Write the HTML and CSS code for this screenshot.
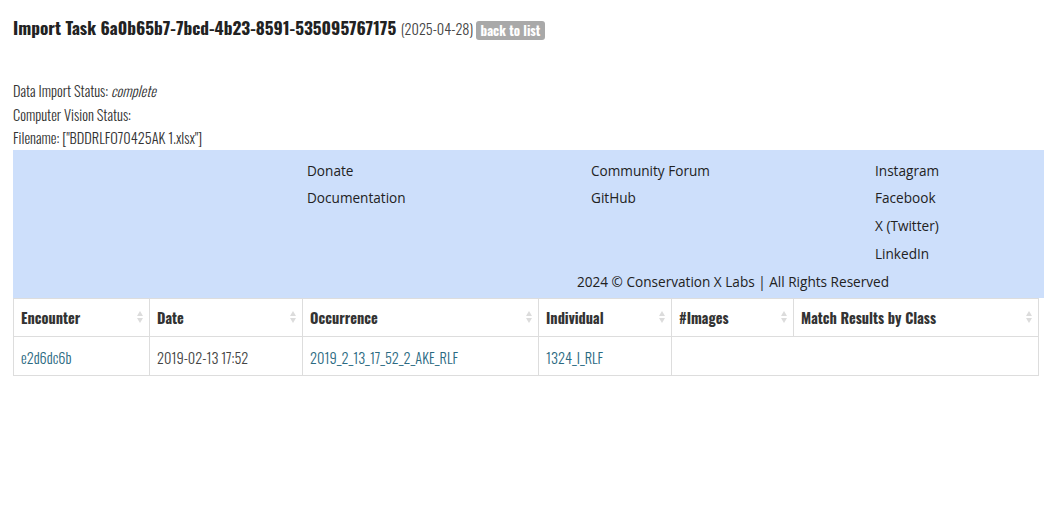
FILE: index.html
```html
<!DOCTYPE html>
<html>
<head>
<title>Import Task</title>
<link rel="stylesheet" href="styles.css">
</head>
<body>
<div class="page">
  <h1 class="task-title">
    Import Task 6a0b65b7-7bcd-4b23-8591-535095767175
    <span class="task-date">(2025-04-28)</span>
    <a class="back-btn" href="#">back to list</a>
  </h1>

  <div class="status-list">
    <p>Data Import Status: <em>complete</em></p>
    <p>Computer Vision Status: </p>
    <p>Filename: ["BDDRLFO70425AK 1.xlsx"]</p>
  </div>

  <div class="site-footer">
    <div class="footer-cols">
      <div class="footer-col"></div>
      <div class="footer-col">
        <a href="#">Donate</a>
        <a href="#">Documentation</a>
      </div>
      <div class="footer-col">
        <a href="#">Community Forum</a>
        <a href="#">GitHub</a>
      </div>
      <div class="footer-col">
        <a href="#">Instagram</a>
        <a href="#">Facebook</a>
        <a href="#">X (Twitter)</a>
        <a href="#">LinkedIn</a>
      </div>
    </div>
    <div class="copyright">2024 &copy; Conservation X Labs | All Rights Reserved</div>
  </div>

  <table class="results">
    <thead>
      <tr>
        <th class="c-enc">Encounter</th>
        <th class="c-date">Date</th>
        <th class="c-occ">Occurrence</th>
        <th class="c-ind">Individual</th>
        <th class="c-img">#Images</th>
        <th class="c-match">Match Results by Class</th>
      </tr>
    </thead>
    <tbody>
      <tr>
        <td><a href="#">e2d6dc6b</a></td>
        <td>2019-02-13 17:52</td>
        <td><a href="#">2019_2_13_17_52_2_AKE_RLF</a></td>
        <td><a href="#">1324_I_RLF</a></td>
        <td colspan="2"></td>
      </tr>
    </tbody>
  </table>
</div>
</body>
</html>
```

FILE: styles.css
```css
body {
  margin: 0;
  font-family: "Oswald", "Open Sans", sans-serif;
  font-weight: 300;
  color: #333;
  background-color: white;
  overflow: hidden;
}
.page {
  padding-left: 13px;
}
.task-title {
  margin: 0;
  padding-top: 14px;
  height: 27px;
  font-size: 17.3px;
  font-weight: 700;
  color: #222;
  line-height: 27px;
}
.task-date {
  font-size: 14.3px;
  font-weight: 300;
  color: #444;
}
.back-btn {
  display: inline-block;
  vertical-align: -1px;
  margin-left: -2px;
  padding: 0 5px;
  font-size: 13px;
  font-weight: 700;
  color: white;
  background-color: #a9a9a9;
  border-radius: 3px;
  text-decoration: none;
  line-height: 19px;
}
.status-list {
  margin-top: 38px;
  font-size: 14.4px;
  color: #333;
}
.status-list p {
  margin: 0;
  line-height: 23.5px;
}
.site-footer {
  background-color: #cddffb;
  height: 148px;
  font-family: "Open Sans", "Noto Sans", sans-serif;
  font-weight: normal;
  font-size: 13.6px;
  color: #222;
}
.footer-cols {
  display: grid;
  grid-template-columns: 294px 284px 284px 1fr;
  padding-top: 7px;
}
.footer-col a {
  display: block;
  color: #222;
  text-decoration: none;
  line-height: 27.7px;
}
.copyright {
  margin-left: 564px;
  margin-top: 5px;
  line-height: 20px;
}
.results {
  border-collapse: collapse;
  width: 1026px;
  font-size: 14.4px;
}
.results th,
.results td {
  border: 1px solid #ddd;
  text-align: left;
  padding: 0 7px;
}
.results th {
  height: 37px;
  font-weight: 700;
  color: #333;
  position: relative;
}
/* sort arrows */
.results th::before,
.results th::after {
  content: "";
  position: absolute;
  right: 6px;
  width: 0;
  height: 0;
  border-left: 3.5px solid transparent;
  border-right: 3.5px solid transparent;
}
.results th::before {
  top: 12px;
  border-bottom: 5px solid #dcdcdc;
}
.results th::after {
  top: 19px;
  border-top: 5px solid #dcdcdc;
}
.results td {
  height: 35px;
  padding-top: 3px;
  color: #444;
}
.results td a {
  color: #2b6a82;
  text-decoration: none;
}
.c-enc { width: 121px; }
.c-date { width: 138px; }
.c-occ { width: 221px; }
.c-ind { width: 118px; }
.c-img { width: 107px; }
```
